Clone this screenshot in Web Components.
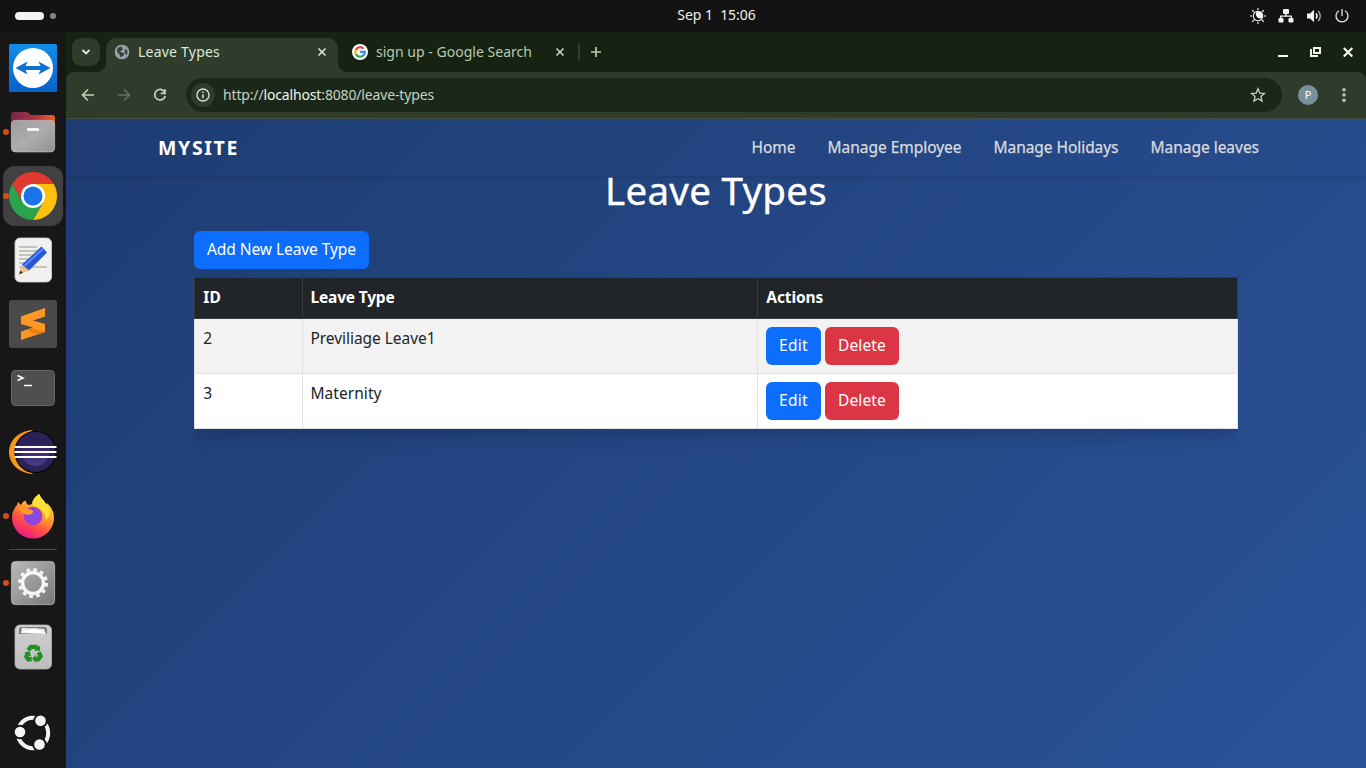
<!DOCTYPE html>
<html lang="en">
<head>
<meta charset="utf-8">
<title>Leave Types</title>
<style>
html,body{margin:0;height:100%;overflow:hidden;background:#131313}
body{font-family:"Noto Sans","Open Sans",sans-serif}
</style>
</head>
<body>
<desktop-shell></desktop-shell>
<script>
const define = (name, html, setup) => {
  customElements.define(name, class extends HTMLElement {
    constructor() {
      super();
      this.attachShadow({mode: 'open'}).innerHTML = html;
    }
    connectedCallback() { if (setup) setup(this, this.shadowRoot); }
  });
};

define('desktop-shell', `
<style>
:host{display:grid;width:1366px;height:768px;grid-template:32px 736px / 66px 1300px;overflow:hidden}
top-bar{grid-column:1 / 3}
main{display:grid;grid-template-rows:40px 47px 649px;min-width:0;background:#162212}
</style>
<top-bar></top-bar>
<app-dock></app-dock>
<main><tab-strip></tab-strip><browser-toolbar></browser-toolbar><site-page></site-page></main>`);

define('top-bar', `
<style>
:host{display:grid;grid-template-columns:1fr auto 1fr;align-items:center;background:#131313;color:#eee;font-size:14px}
.ws{display:flex;align-items:center;gap:6px;padding-left:15px}
.ws b{width:29px;height:8px;border-radius:4px;background:#f3f3f3}
.ws i{width:6px;height:6px;border-radius:3px;background:#858585}
.clock{line-height:20px;padding:0 0 2px 67px}
.tray{display:flex;justify-content:flex-end;gap:12px;padding-right:16px}
svg{width:16px;height:16px;display:block}
</style>
<div class="ws"><b></b><i></i></div>
<div class="clock"><fit-text w="78.500">Sep 1  15:06</fit-text></div>
<div class="tray">
<svg viewBox="0 0 16 16"><g fill="#8d8d8d"><rect x="7" width="2" height="2"/><rect x="7" y="14" width="2" height="2"/><rect y="7" width="2" height="2"/><rect x="14" y="7" width="2" height="2"/></g><path d="M2.200 2.200l1.800 1.800M13.800 2.200L12 4M2.200 13.800L4 12M13.800 13.800L12 12" stroke="#ddd" stroke-width="1.300"/><circle cx="8" cy="8" r="4.700" fill="none" stroke="#f3f3f3" stroke-width="1.100"/><path d="M7 3.300A4.800 4.800 0 0 1 12.600 9.500 4.200 4.200 0 0 1 7 3.300Z" fill="#f3f3f3"/></svg>
<svg viewBox="0 0 16 16" fill="#f3f3f3"><rect x="5" y="1" width="6" height="5" rx="1"/><rect x=".5" y="10" width="5" height="4.500" rx="1"/><rect x="10.500" y="10" width="5" height="4.500" rx="1"/><path d="M7.300 5h1.400v2.400H14V11h-1.400V8.800H3.400V11H2V7.400h5.300z"/></svg>
<svg viewBox="0 0 16 16"><path d="M1 5.500h3L8 1.700v12.600L4 10.500H1z" fill="#f3f3f3"/><path d="M10 5.500q2 2.500 0 5" fill="none" stroke="#f3f3f3" stroke-width="1.500"/><path d="M12.200 3q4.200 5 0 10" fill="none" stroke="#aaa" stroke-width="1.400"/></svg>
<svg viewBox="0 0 16 16" fill="none" stroke="#e4e4e4" stroke-width="1.300"><path d="M5 2.700a6 6 0 1 0 6 0M8 1v7"/></svg>
</div>`);

define('app-dock', `
<style>
:host{display:flex;flex-direction:column;background:#171717;padding-top:4px;box-sizing:border-box}
hr{width:48px;height:1px;border:0;margin:1px auto 1px;background:#4a4a4a}
.end{margin-top:22px}
</style>
<dock-item>
<svg viewBox="0 0 48 48"><defs><linearGradient id="a" x2="0" y2="1"><stop stop-color="#138de8"/><stop offset="1" stop-color="#0862c8"/></linearGradient></defs><rect width="48" height="48" rx="1.500" fill="url(#a)"/><circle cx="24" cy="24" r="20" fill="#fff"/><path d="M6.500 24l12-6.500-2 4.500h15l-2-4.500 12 6.500-12 6.500 2-4.500h-15l2 4.500z" fill="#0c73d5"/></svg></dock-item>
<dock-item running>
<svg viewBox="0 0 48 48"><defs><linearGradient id="f"><stop stop-color="#75254f"/><stop offset=".55" stop-color="#ad3440"/><stop offset="1" stop-color="#ed6126"/></linearGradient><linearGradient id="g" x2="1" y2="1"><stop stop-color="#9b9b9b"/><stop offset=".5" stop-color="#adadad"/><stop offset="1" stop-color="#929292"/></linearGradient></defs><path d="M2 14V7q0-3 3-3h12q2 0 3 1.500L22 7h21q3 0 3 3v8H2z" fill="url(#f)"/><rect x="2.400" y="12.400" width="43.200" height="31.500" rx="4" fill="url(#g)" stroke="#bdbdbd" stroke-width=".8"/><rect x="18" y="20" width="12" height="3" rx="1" fill="#f5f5f5"/></svg></dock-item>
<dock-item running active>
<svg viewBox="0 0 48 48"><path d="M3.220 12A24 24 0 0 1 44.780 12H24v12l-10.400 6z" fill="#e03a2e"/><path d="M24 24V12H44.780A24 24 0 0 1 24 48L34.400 30z" fill="#fcc010"/><path d="M24 24l10.400 6L24 48A24 24 0 0 1 3.220 12L13.600 30z" fill="#2ba24c"/><circle cx="24" cy="24" r="12" fill="#fff"/><circle cx="24" cy="24" r="9.500" fill="#1a73e8"/></svg></dock-item>
<dock-item>
<svg viewBox="0 0 48 48"><rect x="6" y="2" width="36.500" height="44" rx="5" fill="#f0f0f0" stroke="#d2d2d2" stroke-width=".8"/><g fill="#c5c4b8"><rect x="10" y="10" width="18" height="2"/><rect x="10" y="14" width="18" height="2"/><rect x="10" y="18" width="17" height="2"/><rect x="10" y="22" width="14" height="2"/><rect x="10" y="26" width="10" height="2"/><rect x="10" y="30" width="28" height="2"/></g><path d="M10 38.500l3-10 7 6z" fill="#f0bc82"/><path d="M10 38.500l1.500-4 2.500 2.200z" fill="#333"/><path d="M13 28.500L32.500 10.500l5.500 6L20 34.500z" fill="#2856d8"/><path d="M15 30.300L34.300 12.500" stroke="#5e87f4" stroke-width="2"/></svg></dock-item>
<dock-item>
<svg viewBox="0 0 48 48"><rect width="48" height="48" rx="3" fill="#4a4a4a"/><path d="M12 16.500L36 8v8.500l-12 4 12 3.500v8l-24 8v-8.500l12-4L12 24z" fill="#ff9722"/><path d="M22 28.200L36 32l-8 2.700-10-4.900z" fill="#e77f0d"/></svg></dock-item>
<dock-item>
<svg viewBox="0 0 48 48"><rect x="2.500" y="6.500" width="43" height="35" rx="4" fill="#4f4f4f" stroke="#696969"/><path d="M8.500 11.500l5.500 2.500-5.500 2.500M15 21.500h8" fill="none" stroke="#fff" stroke-width="1.600"/></svg></dock-item>
<dock-item>
<svg viewBox="0 0 48 48"><defs><linearGradient id="e" x2="0" y2="1"><stop stop-color="#281d50"/><stop offset="1" stop-color="#4c3c8e"/></linearGradient></defs><path d="M24 2C-8 4-8 44 24 46L17 40Q5 24 17 7z" fill="#f7941e"/><circle cx="26.500" cy="24" r="20.500" fill="#2c2255" stroke="#080812" stroke-width="1.200"/><circle cx="26.500" cy="24" r="14" fill="url(#e)"/><g fill="#fff"><rect x="5.500" y="18" width="42" height="2"/><rect x="5.500" y="23" width="42" height="2"/><rect x="5.500" y="28" width="42" height="2"/></g></svg></dock-item>
<dock-item running>
<svg viewBox="0 0 48 48"><defs><linearGradient id="x" x1=".85" y1="0" x2=".3" y2="1"><stop stop-color="#ffee46"/><stop offset=".4" stop-color="#ffa72b"/><stop offset=".7" stop-color="#ff4e46"/><stop offset="1" stop-color="#e9158a"/></linearGradient><radialGradient id="p"><stop stop-color="#7356ea"/><stop offset="1" stop-color="#a33bd6"/></radialGradient></defs><path d="M3 26q0-8 5-13l1-3 3 3q3-5 5-4 0 3 3 4l3-1Q23 7 30 2q2 4 5 7l2 4 1-2q7 6 7 15a21 20.500 0 0 1-42 0z" fill="url(#x)"/><path d="M30 2q-7 5-6 12 12 2 13 14 8-8-2-19-4-4-5-7z" fill="#ffe138"/><circle cx="24" cy="24" r="9.300" fill="url(#p)"/><path d="M9 16q5-2 9 1 5 0 6.500 2.500-1 3-7 3.500-5-2-8.500-7z" fill="#ff9a22"/></svg></dock-item>
<hr>
<dock-item running>
<svg viewBox="0 0 48 48"><defs><linearGradient id="s" x2="1" y2="1"><stop stop-color="#bababa"/><stop offset="1" stop-color="#777"/></linearGradient></defs><rect x="2.400" y="2.400" width="43.200" height="43.200" rx="4" fill="url(#s)" stroke="#bdbdbd" stroke-width=".8"/><g fill="none" stroke="#f6f6f4"><circle cx="24" cy="24" r="13.500" stroke-width="3" stroke-dasharray="3.600 3.469"/><circle cx="24" cy="24" r="10.500" stroke-width="3.500"/></g></svg></dock-item>
<dock-item>
<svg viewBox="0 0 48 48"><defs><linearGradient id="t" x2="0" y2="1"><stop stop-color="#d1d1d1"/><stop offset="1" stop-color="#bdbdbd"/></linearGradient></defs><rect x="6" y="2" width="36.500" height="44" rx="5" fill="url(#t)" stroke="#b5b5b5" stroke-width=".8"/><path d="M10 11V7q0-3 3-3h22q3 0 3 3v4z" fill="#777"/><path d="M12 10l1-5 22 1 2 5zM13 8l13-3 10 4" fill="#fff" stroke="#ccc" stroke-width=".5"/><g transform="translate(2.900 4.500) scale(.88)"><g fill="none" stroke="#239125" stroke-width="5"><path d="M18.500 26l3.200-4h5.500l1.600 2.500"/><path d="M30.500 28l2 4.500-2.600 3.500h-3.500"/><path d="M22.500 36h-4l-2-3 1.800-4"/></g><g fill="#239125"><path d="M25.500 26.500l6.500 0 0-6z"/><path d="M27 31v9l-4-4.500z"/><path d="M14 28.500l6-1.500 2 6z"/></g></g></svg></dock-item>
<dock-item class="end">
<svg viewBox="0 0 48 48"><circle cx="24" cy="24" r="15.200" fill="none" stroke="#f4f4f4" stroke-width="4"/><g fill="#f4f4f4" stroke="#171717" stroke-width="2"><circle cx="11" cy="23" r="6.300"/><circle cx="31.500" cy="11.800" r="6.300"/><circle cx="30.500" cy="35.500" r="6.300"/></g></svg></dock-item>`);

define('dock-item', `
<style>
:host{display:grid;place-items:center;height:64px;flex:none;position:relative}
div{width:60px;height:60px;border-radius:12px;display:grid;place-items:center}
:host([active]) div{background:#414141}
:host([running])::before{content:"";position:absolute;left:3px;top:29px;width:6px;height:6px;border-radius:50%;background:#d64b1c;z-index:1}
::slotted(svg){width:48px;height:48px;display:block}
</style><div><slot></slot></div>`);

define('tab-strip', `
<style>
:host{display:flex;align-items:center;background:#162212;color:#b7cbb1;font-size:14px;padding-left:6px}
svg{display:block;flex:none}
.search{width:28px;height:28px;border-radius:9px;background:#2f3c2c;display:grid;place-items:center}
.tab{box-sizing:border-box;height:34px;align-self:end;display:flex;align-items:center;line-height:20px;padding-bottom:6px}
.on{position:relative;width:232px;margin-left:6px;padding-left:8px;padding-right:10px;border-radius:10px 10px 0 0;background:#2f3c2c;color:#dce8d8}
.on::before,.on::after{content:"";position:absolute;bottom:0;width:10px;height:10px}
.on::before{left:-10px;background:radial-gradient(circle at 0 0,transparent 10px,#2f3c2c 10.500px)}
.on::after{right:-10px;background:radial-gradient(circle at 100% 0,transparent 10px,#2f3c2c 10.500px)}
.off{width:228px;padding:0 0 6px 14px}
.tab fit-text{margin-left:8px;flex:1}
.bar{width:1.500px;height:16px;background:#31402d;margin-left:12px}
.win{display:flex;align-items:center;gap:16.500px;margin-left:auto;padding-right:10px}
</style>
<div class="search"><svg width="12" height="12" viewBox="0 0 12 12"><path d="M2.500 4L6 7.500 9.500 4" fill="none" stroke="#e0ecdc" stroke-width="1.800"/></svg></div>
<div class="tab on">
<svg width="16" height="16" viewBox="0 0 16 16"><circle cx="8" cy="8" r="7.200" fill="#9a9fac"/><path d="M3 5l1.500-2 4-1-1 2 1.500 1-2 2-2 .5 3 1 2.500 1-1 2-2 1-1 1-1-3-2-2zM11 5l2 1 1 3-2 2-1.500-3z" fill="#344030"/><circle cx="8" cy="8" r="6.500" fill="none" stroke="#9a9fac" stroke-width="1.500"/></svg>
<fit-text w="82">Leave Types</fit-text>
<svg width="12" height="12" viewBox="0 0 12 12"><path d="M2.500 2.500l7 7m0-7l-7 7" stroke="#dce8d8" stroke-width="1.600"/></svg></div>
<div class="tab off">
<svg width="16" height="16" viewBox="0 0 16 16"><circle cx="8" cy="8" r="8" fill="#fff"/><g fill="none" stroke-width="2.200"><path d="M11.500 4.700A4.800 4.800 0 0 0 3.700 5.900" stroke="#ea4335"/><path d="M3.800 5.700a4.800 4.800 0 0 0 0 4.600" stroke="#fbbc05"/><path d="M3.700 10.100a4.800 4.800 0 0 0 7.600 1.300" stroke="#34a853"/><path d="M8 7.900h4.800q0 2.300-1.600 3.600" stroke="#4285f4"/></g></svg>
<fit-text w="156">sign up - Google Search</fit-text>
<svg width="12" height="12" viewBox="0 0 12 12"><path d="M2.500 2.500l7 7m0-7l-7 7" stroke="#c5d7c0" stroke-width="1.600"/></svg></div>
<div class="bar"></div>
<svg style="margin-left:9px" width="14" height="14" viewBox="0 0 14 14"><path d="M7 2v10M2 7h10" stroke="#b7cbb1" stroke-width="1.700"/></svg>
<div class="win">
<svg width="16" height="16" viewBox="0 0 16 16"><path d="M3 12h10" stroke="#f1f5f0" stroke-width="2"/></svg>
<svg width="16" height="16" viewBox="0 0 16 16" fill="none" stroke="#f1f5f0" stroke-width="2"><path d="M6 4h6v5H6zM3 5v7h7"/></svg>
<svg width="16" height="16" viewBox="0 0 16 16"><path d="M3.800 4l8.500 8.500m0-8.500l-8.500 8.500" stroke="#f1f5f0" stroke-width="2.200"/></svg>
</div>`);

define('browser-toolbar', `
<style>
:host{display:flex;align-items:center;box-sizing:border-box;background:#2f3c2c;border-radius:8px 8px 0 0;border-bottom:1px solid #41503e;padding:0 14px 0 14px;color:#c5d2c1;font-size:14px}
svg{display:block;flex:none}
nav{display:flex;gap:20px}
.url{box-sizing:border-box;margin-left:18px;width:1096px;height:34px;border-radius:17px;background:#1b2819;display:flex;align-items:center;padding:0 16px 0 5px;line-height:20px}
.info{width:24px;height:24px;border-radius:50%;background:#2f3c2c;display:grid;place-items:center;margin-right:8px}
.url fit-text{margin-right:auto}
b{font-weight:400;color:#eef4ec}
.me{width:20px;height:20px;border-radius:50%;background:#78909c;color:#fff;font-size:11px;line-height:20px;text-align:center;margin:0 18px 0 16px}
</style>
<nav>
<svg width="16" height="16" viewBox="0 0 16 16" fill="none" stroke="#c1d2bc" stroke-width="1.600"><path d="M14 8H3M8 2.500L2.500 8 8 13.500"/></svg>
<svg width="16" height="16" viewBox="0 0 16 16" fill="none" stroke="#65725f" stroke-width="1.600"><path d="M2 8h11M8 2.500L13.500 8 8 13.500"/></svg>
<svg width="16" height="16" viewBox="0 0 16 16" fill="none" stroke="#c1d2bc" stroke-width="1.700"><path d="M12.600 5A5.300 5.300 0 1 0 13.200 9M13 2.200V6.300H8.800"/></svg>
</nav>
<div class="url"><div class="info"><svg width="16" height="16" viewBox="0 0 16 16"><circle cx="8" cy="8" r="6" fill="none" stroke="#d5dfd2" stroke-width="1.400"/><path d="M8 7.200v4M8 4.500v1.500" stroke="#d5dfd2" stroke-width="1.500"/></svg></div>
<fit-text w="211">http://<b>localhost</b>:8080/leave-types</fit-text>
<svg width="16" height="16" viewBox="0 0 16 16"><path d="M8 1.800l1.800 4.300 4.700.4-3.600 3 1.100 4.600L8 11.700l-4 2.400 1.100-4.600-3.600-3 4.700-.4z" fill="none" stroke="#c1d2bc" stroke-width="1.300"/></svg></div>
<div class="me">P</div>
<svg width="16" height="16" viewBox="0 0 16 16" fill="#b9cdb4"><circle cx="8" cy="2.700" r="1.700"/><circle cx="8" cy="8" r="1.700"/><circle cx="8" cy="13.300" r="1.700"/></svg>`);

define('site-page', `
<style>
:host{display:block;background:linear-gradient(135deg,#1e3c72,#2a5298);color:#fff;overflow:hidden}
main{padding:0 128px}
h1{margin:-10px 0 0;height:48px;font-weight:400;font-size:38.500px;line-height:48px;text-align:center;-webkit-text-stroke:.35px #fff}
.add{display:flex;padding:17px 0 8px}
</style>
<site-nav></site-nav>
<main><h1><fit-text w="222">Leave Types</fit-text></h1>
<div class="add"><bs-button><fit-text w="149">Add New Leave Type</fit-text></bs-button></div>
<leave-table></leave-table></main>`);

define('site-nav', `
<style>
:host{display:flex;align-items:center;justify-content:space-between;box-sizing:border-box;height:57px;padding:0 107px 0 92px;box-shadow:0 2px 4px rgba(0,0,0,.1);color:#d9dbdf;font-size:15.500px;line-height:24px}
strong{color:#fff;font-size:19.500px;font-weight:700}
nav{display:flex;gap:32px;padding-bottom:2px;-webkit-text-stroke:.25px #d9dbdf}
</style>
<strong><fit-text w="81">MYSITE</fit-text></strong>
<nav><fit-text w="44">Home</fit-text><fit-text w="134">Manage Employee</fit-text><fit-text w="125">Manage Holidays</fit-text><fit-text w="108.500">Manage leaves</fit-text></nav>`);

define('bs-button', `
<style>
:host{display:inline-flex;box-sizing:border-box;height:38px;padding:6px 13px 8px;border-radius:6px;background:#0d6efd;color:#fff;font-size:15.500px;line-height:24px}
:host([kind=danger]){background:#dc3545}
</style><slot></slot>`);

define('leave-table', `
<style>
:host{display:block;box-shadow:0 8px 16px rgba(0,0,0,.15);clip-path:inset(0 0 -30px 0);color:#212529;font-size:15.500px;line-height:24px}
.r{display:grid;grid-template-columns:108px 455px 480px;background:#fff;border-right:1px solid #dee2e6}
.r>div{box-sizing:border-box;border-left:1px solid #dee2e6;border-bottom:1px solid #dee2e6;padding:7px 8px 8px 7.500px;height:55px}
.r>div:first-child,.h>div:last-child{padding-left:8.300px}
.h{background:#212529;color:#fff;font-weight:700;border-color:#373b3e}
.h>div{height:42px;border-color:#373b3e;border-top:1px solid #373b3e;padding-top:7px}
.odd{background:#f2f2f2}
.r>.act{display:flex;gap:4px;padding:8px}
</style>
<div class="r h"><div><fit-text w="17.500">ID</fit-text></div><div><fit-text w="84">Leave Type</fit-text></div><div><fit-text w="57">Actions</fit-text></div></div>
<div class="r odd"><div><fit-text w="9">2</fit-text></div><div><fit-text w="125">Previliage Leave1</fit-text></div><div class="act"><bs-button><fit-text w="29">Edit</fit-text></bs-button><bs-button kind="danger"><fit-text w="48">Delete</fit-text></bs-button></div></div>
<div class="r"><div><fit-text w="9">3</fit-text></div><div><fit-text w="71">Maternity</fit-text></div><div class="act"><bs-button><fit-text w="29">Edit</fit-text></bs-button><bs-button kind="danger"><fit-text w="48">Delete</fit-text></bs-button></div></div>`);

/* Inline label whose tracking is adjusted so that it fills the width in its w attribute. */
define('fit-text', `<style>:host{display:inline-block;text-align:left}span{display:block;width:max-content;white-space:pre}</style><span><slot></slot></span>`,
(host, root) => {
  const span = root.querySelector('span'), want = +host.getAttribute('w'), n = host.textContent.length;
  span.style.letterSpacing = (want - span.getBoundingClientRect().width) / n + 'px';
  span.style.width = want + 'px';
});
</script>
</body>
</html>
